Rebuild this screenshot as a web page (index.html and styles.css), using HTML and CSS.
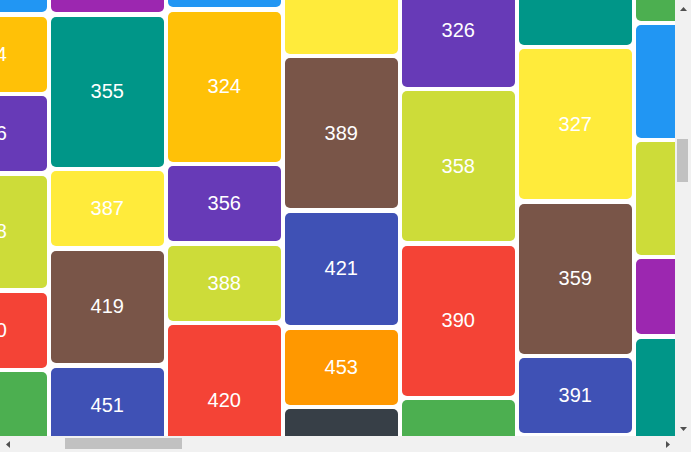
FILE: index.html
```html
<!DOCTYPE html>
<html lang="en">
<head>
    <meta charset="UTF-8">
    <meta name="viewport" content="width=device-width, initial-scale=1.0">
    <title>Masonry</title>
    <link rel="stylesheet" href="styles.css">
</head>
<body>
    <div class="frame">
        <div class="viewport" id="vista">
            <div class="board">
                <div class="col c0">
                    <div class="tile l blue">322</div>
                    <div class="tile s amber">354</div>
                    <div class="tile s deep-purple">386</div>
                    <div class="tile m lime">418</div>
                    <div class="tile s red">450</div>
                    <div class="tile l green">482</div>
                </div>
                <div class="col c1">
                    <div class="tile l purple">323</div>
                    <div class="tile l teal">355</div>
                    <div class="tile s yellow">387</div>
                    <div class="tile m brown">419</div>
                    <div class="tile s indigo">451</div>
                    <div class="tile l orange">483</div>
                </div>
                <div class="col c2">
                    <div class="tile l blue">292</div>
                    <div class="tile l amber">324</div>
                    <div class="tile s deep-purple">356</div>
                    <div class="tile s lime">388</div>
                    <div class="tile l red">420</div>
                </div>
                <div class="col c3">
                    <div class="tile l yellow">357</div>
                    <div class="tile l brown">389</div>
                    <div class="tile m indigo">421</div>
                    <div class="tile s orange">453</div>
                    <div class="tile s dark">485</div>
                </div>
                <div class="col c4">
                    <div class="tile m teal">294</div>
                    <div class="tile m deep-purple">326</div>
                    <div class="tile l lime">358</div>
                    <div class="tile l red">390</div>
                    <div class="tile m green">422</div>
                </div>
                <div class="col c5">
                    <div class="tile l teal">295</div>
                    <div class="tile l yellow">327</div>
                    <div class="tile l brown">359</div>
                    <div class="tile s indigo">391</div>
                    <div class="tile m amber">423</div>
                </div>
                <div class="col c6">
                    <div class="tile l green">296</div>
                    <div class="tile m blue">328</div>
                    <div class="tile m lime">360</div>
                    <div class="tile s purple">392</div>
                    <div class="tile l teal">424</div>
                </div>
            </div>
        </div>

        <!-- Barras de desplazamiento -->
        <div class="vbar">
            <div class="btn up">
                <svg width="7" height="4" viewBox="0 0 7 4"><polygon points="0,4 3.5,0 7,4" fill="#505050"/></svg>
            </div>
            <div class="track">
                <div class="thumb" id="thumbY"></div>
            </div>
            <div class="btn down">
                <svg width="7" height="4" viewBox="0 0 7 4"><polygon points="0,0 7,0 3.5,4" fill="#505050"/></svg>
            </div>
        </div>
        <div class="hbar">
            <div class="btn left">
                <svg width="4" height="7" viewBox="0 0 4 7"><polygon points="4,0 4,7 0,3.5" fill="#505050"/></svg>
            </div>
            <div class="track">
                <div class="thumb" id="thumbX"></div>
            </div>
            <div class="btn right">
                <svg width="4" height="7" viewBox="0 0 4 7"><polygon points="0,0 4,3.5 0,7" fill="#505050"/></svg>
            </div>
        </div>
        <div class="corner"></div>
    </div>

    <script src="script.js"></script>
</body>
</html>
```

FILE: styles.css
```css
* {
    box-sizing: border-box;
}

html, body {
    margin: 0;
    height: 100%;
    overflow: hidden;
}

body {
    font-family: "Liberation Sans", Arial, sans-serif;
    background-color: #ffffff;
}

.frame {
    display: grid;
    grid-template-columns: 1fr 16px;
    grid-template-rows: 1fr 16px;
    height: 100vh;
}

.viewport {
    overflow: hidden;
}

/* Tablero */
.board {
    display: flex;
    align-items: flex-start;
    gap: 4.5px;
    width: 3732px;
    height: 4117px;
    padding: 1114px 0 0 223px;
}

.col {
    display: flex;
    flex-direction: column;
    gap: 4.5px;
    width: 112.5px;
    flex-shrink: 0;
}

.c0, .c1 { margin-top: 5px; }
.c3 { margin-top: 46.5px; }
.c5 { margin-top: 37.5px; }
.c6 { margin-top: 13.5px; }

/* Piezas */
.tile {
    display: flex;
    align-items: center;
    justify-content: center;
    border-radius: 5px;
    color: #ffffff;
    font-size: 20px;
}

.s { height: 75px; }
.m { height: 112.5px; }
.l { height: 150px; }

.blue { background-color: #2196f3; }
.purple { background-color: #9c27b0; }
.deep-purple { background-color: #673ab7; }
.indigo { background-color: #3f51b5; }
.teal { background-color: #009688; }
.green { background-color: #4caf50; }
.lime { background-color: #cddc39; }
.yellow { background-color: #ffeb3b; }
.amber { background-color: #ffc107; }
.orange { background-color: #ff9800; }
.red { background-color: #f44336; }
.brown { background-color: #795548; }
.dark { background-color: #373f47; }

/* Barras */
.vbar, .hbar, .corner {
    background-color: #f1f1f1;
}

.vbar {
    display: flex;
    flex-direction: column;
}

.hbar {
    display: flex;
}

.track {
    flex: 1;
}

.thumb {
    background-color: #c1c1c1;
}

.vbar .thumb {
    width: 11px;
    margin-left: 2px;
}

.hbar .thumb {
    height: 11px;
    margin-top: 2px;
}

.btn {
    display: flex;
    justify-content: center;
    flex-shrink: 0;
}

.vbar .btn {
    height: 15px;
}

.btn.up {
    align-items: flex-end;
    padding-bottom: 4px;
}

.btn.down {
    align-items: flex-start;
    padding-top: 6px;
}

.hbar .btn {
    width: 15px;
    align-items: center;
}

.btn svg {
    display: block;
}
```

FILE: script.js
```js
const vista = document.getElementById("vista");
vista.scrollLeft = 289;
vista.scrollTop = 1257;

// Tamaño y posición de los pulgares según el desplazamiento
function ajustarPulgar(id, visible, total, pos, pista) {
    const largo = pista * visible / total;
    const inicio = pos / (total - visible) * (pista - largo);
    const pulgar = document.getElementById(id);
    if (id === "thumbY") {
        pulgar.style.height = largo + "px";
        pulgar.style.marginTop = inicio + "px";
    } else {
        pulgar.style.width = largo + "px";
        pulgar.style.marginLeft = inicio + "px";
    }
}

const pistaY = document.querySelector(".vbar .track").clientHeight;
const pistaX = document.querySelector(".hbar .track").clientWidth;

ajustarPulgar("thumbY", vista.clientHeight, vista.scrollHeight, vista.scrollTop, pistaY);
ajustarPulgar("thumbX", vista.clientWidth, vista.scrollWidth, vista.scrollLeft, pistaX);
```
